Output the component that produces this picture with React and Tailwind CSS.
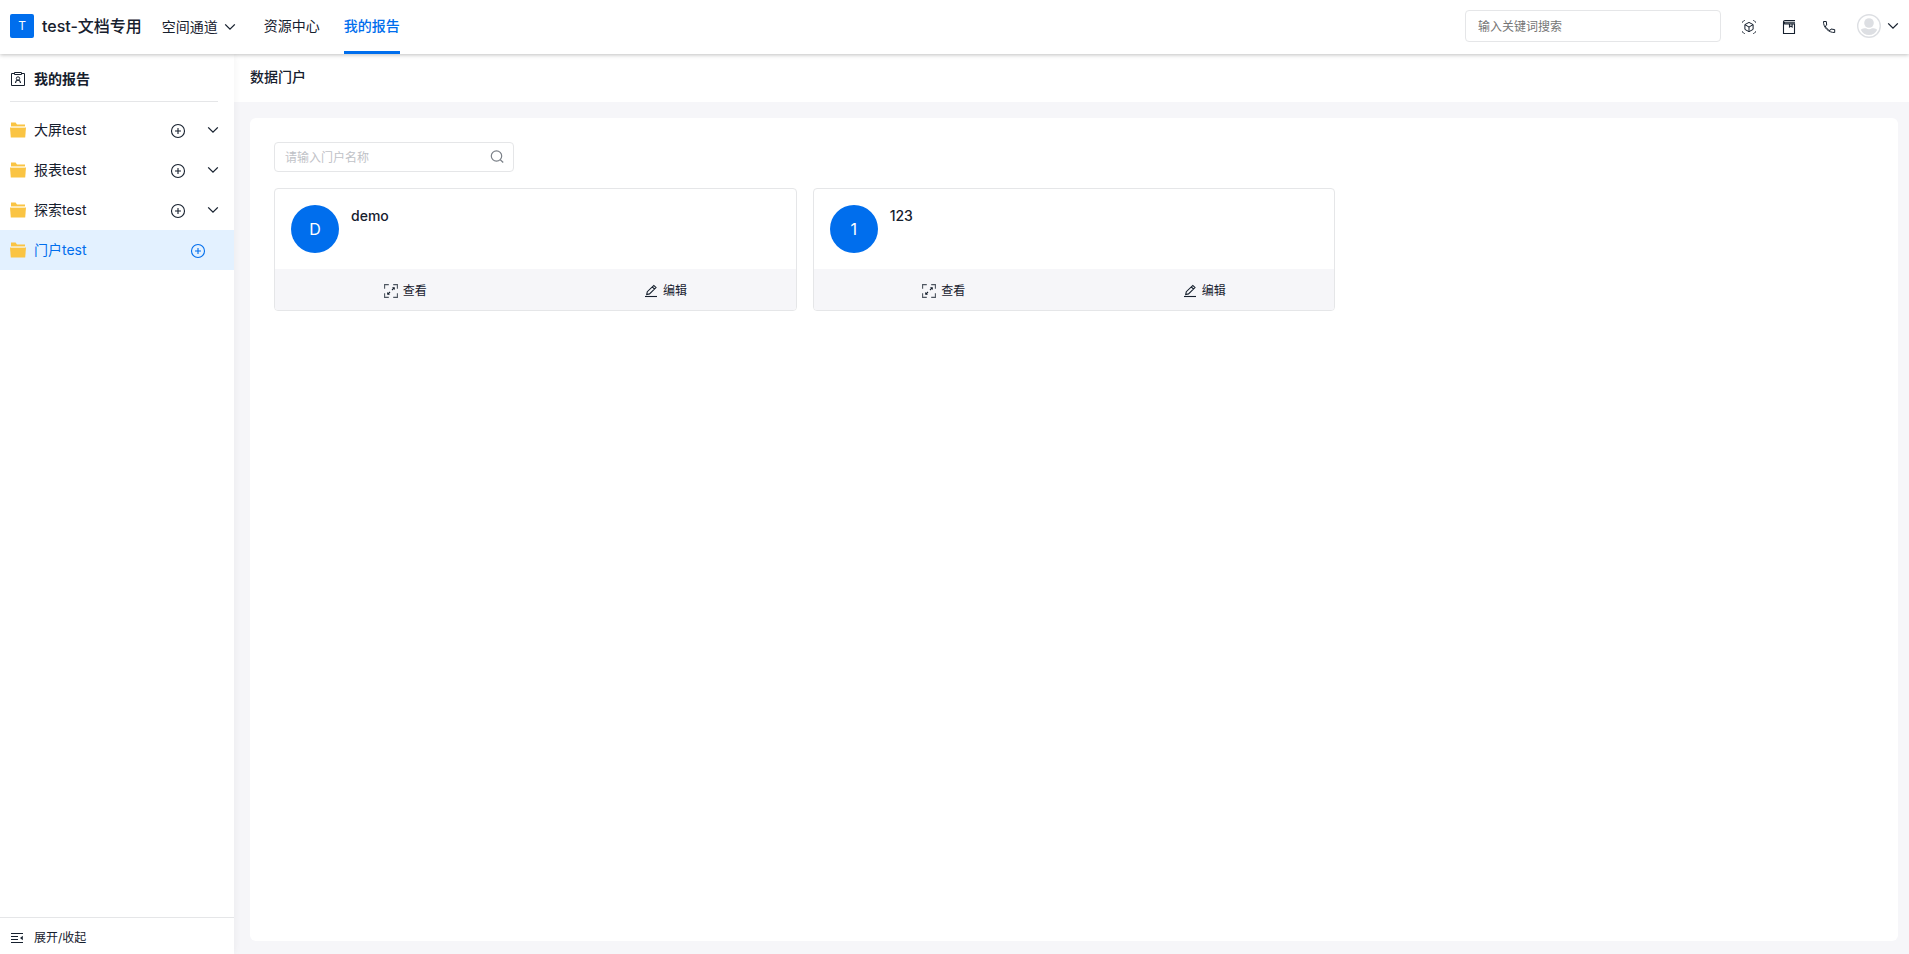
import React from 'react';

const folders = [
  { name: '大屏test', expandable: true },
  { name: '报表test', expandable: true },
  { name: '探索test', expandable: true },
  { name: '门户test', active: true },
];

const portals = [
  { name: 'demo', initial: 'D' },
  { name: '123', initial: '1' },
];

const ChevronIcon = () => (
  <svg className="w-3 h-3" viewBox="0 0 12 12" fill="none" stroke="currentColor" strokeWidth="1.3">
    <path d="M1.2 3.4 6 8.2l4.8-4.8" />
  </svg>
);

const FolderIcon = () => (
  <svg className="w-4 h-4 shrink-0" viewBox="0 0 16 16">
    <path d="M1 .4h4.600L7 2.600h8v2H1z" fill="#fac443" />
    <path d="M0 5.600h16l-.8 10H.8z" fill="#fac443" />
    <path d="M1 4.600h14v1H1z" fill="#fff0c9" />
  </svg>
);

const PlusCircleIcon = () => (
  <svg className="w-4 h-4" viewBox="0 0 16 16" fill="none" stroke="currentColor" strokeWidth="1.1">
    <circle cx="8" cy="8" r="6.5" />
    <path d="M8 5v6M5 8h6" />
  </svg>
);

const ReportIcon = () => (
  <svg className="w-4 h-4" viewBox="0 0 16 16" fill="none" stroke="currentColor" strokeWidth="1">
    <path d="M4 2.500H1.500v12h13v-12H12" />
    <path d="M4.500 1.500h7v2h-7z" />
    <circle cx="8" cy="7.500" r="1.700" />
    <path d="M5.500 12c.2-1.900 1.100-2.800 2.500-2.800s2.300.9 2.500 2.800" strokeWidth="1.100" />
  </svg>
);

const CubeScanIcon = () => (
  <svg className="w-4 h-4" viewBox="0 0 16 16" fill="none" stroke="currentColor" strokeWidth="1">
    <path d="M1.500 3.600V3L3 1.500h.6M12.400 1.500h.6L14.500 3v.6M1.500 12.400v.6L3 14.500h.6M12.400 14.500h.6l1.500-1.500v-.6" />
    <path d="m8 3.400 4.100 2.200v4.800L8 12.700l-4.100-2.300V5.600z" />
    <path d="M3.900 5.700 8 8l4.100-2.300M8 8v4.600" />
  </svg>
);

const BookIcon = () => (
  <svg className="w-4 h-4" viewBox="0 0 16 16" fill="none" stroke="currentColor" strokeWidth="1.1">
    <path d="M14 1.500H4A1.500 1.500 0 0 0 2.500 3v11.500h11v-9.600H3.600A1 1 0 0 1 3.600 3.300H14" />
    <path d="M8.500 5v3l1.300-.9 1.300.9V5" />
  </svg>
);

const PhoneIcon = () => (
  <svg className="w-4 h-4" viewBox="0 0 16 16" fill="none" stroke="currentColor" strokeWidth="1" strokeLinejoin="round">
    <path d="M2.500 2.500h2.800l.4 3.600-1.400.9c.9 2.100 2.500 3.700 4.700 4.600l1-1.600 3.700.6v2.900C7.600 13.700 2.300 8.600 2.500 2.500z" />
  </svg>
);

const AvatarIcon = () => (
  <svg className="w-6 h-6" viewBox="0 0 24 24">
    <circle cx="12" cy="12" r="11.3" fill="#fff" stroke="#dddfe3" strokeWidth="1.4" />
    <circle cx="12" cy="9" r="4.8" fill="#dddfe3" />
    <path d="M3.800 15.800C5 14.600 7 14.300 9 14.300c1.800 1.200 4.200 1.200 6 0 2 0 4 .3 5.200 1.500-1.500 3.300-4.600 5.300-8.200 5.300s-6.700-2-8.200-5.300z" fill="#dddfe3" />
  </svg>
);

const SearchIcon = () => (
  <svg className="w-3.5 h-3.5" viewBox="0 0 14 14" fill="none" stroke="currentColor" strokeWidth="1.2">
    <circle cx="6.500" cy="6" r="5.200" />
    <path d="m10.300 9.800 2.900 2.700" />
  </svg>
);

const ViewIcon = () => (
  <svg className="w-3.5 h-3.5" viewBox="0 0 14 14" fill="none" stroke="currentColor">
    <path d="M4.800 .6H.6v4.200M9.200 .6h4.200v4.200M4.800 13.400H.6V9.200M9.200 13.400h4.200V9.200" strokeWidth="1.1" opacity=".75" />
    <path d="M8 6l2-2M6 8l-2 2" strokeWidth="1.1" />
    <path d="M8 3.200h2.800V6zM6 10.800H3.200V8z" fill="currentColor" stroke="none" />
  </svg>
);

const EditIcon = () => (
  <svg className="w-3.5 h-3.5" viewBox="0 0 14 14" fill="none" stroke="currentColor" strokeWidth="1.1">
    <path d="M1 12.500h12" />
    <path d="m2.700 10.500.6-2.800 6.500-6.300 2.200 2.200-6.500 6.300zM8.300 2.900l2.200 2.200" />
  </svg>
);

const CollapseIcon = () => (
  <svg className="w-3.5 h-3.5" viewBox="0 0 14 14" fill="none" stroke="currentColor" strokeWidth="1">
    <path d="M1 2.500h12M1 5.500h7M1 8.500h7M1 11.500h12" />
    <path d="M12.800 4.800v4.400L10 7z" fill="currentColor" stroke="none" />
  </svg>
);

const Header = () => (
  <header className="relative z-20 flex h-[54px] shrink-0 items-center bg-white px-2.5 pb-0.5 shadow-[0_1px_4px_rgba(0,0,0,0.25)]">
    <span className="flex h-6 w-6 items-center justify-center rounded-xs bg-[#006eed] text-xs text-white">T</span>
    <span className="ml-2 text-base font-medium">test-文档专用</span>
    <button className="ml-5 flex items-center gap-1.5 pt-0.5">
      空间通道
      <ChevronIcon />
    </button>
    <nav className="-mb-0.5 ml-7 flex gap-6 self-stretch">
      <a href="#resources" className="flex items-center border-b-3 border-transparent">资源中心</a>
      <a href="#reports" className="flex items-center border-b-3 border-[#006eed] font-medium text-[#006eed]">我的报告</a>
    </nav>
    <input
      type="search"
      aria-label="输入关键词搜索"
      placeholder="输入关键词搜索"
      className="ml-auto h-8 w-64 rounded-sm border border-[#e5e6e8] px-3 text-xs outline-none placeholder:text-[#757575]"
    />
    <div className="ml-5 flex items-center gap-6 pt-0.5">
      <button aria-label="场景"><CubeScanIcon /></button>
      <button aria-label="文档"><BookIcon /></button>
      <button aria-label="电话"><PhoneIcon /></button>
    </div>
    <button aria-label="账户" className="ml-5 flex items-center gap-1.5">
      <AvatarIcon />
      <ChevronIcon />
    </button>
  </header>
);

const Sidebar = () => (
  <aside className="relative z-10 flex w-[234px] shrink-0 flex-col bg-white shadow-[0_0_8px_rgba(0,0,0,0.06)]">
    <h2 className="ml-2.5 mr-4 flex h-12 items-center gap-2 border-b border-[#e5e6e8] pt-0.5 text-sm font-semibold">
      <ReportIcon />
      我的报告
    </h2>
    <ul className="mt-2 flex-1">
      {folders.map((folder) => (
        <li
          key={folder.name}
          className={`flex h-10 items-center pl-2.5 ${folder.active ? 'bg-[#e3f1ff] pr-7 text-[#006eed]' : 'pr-[15px]'}`}
        >
          <a href="#folder" className="flex flex-1 items-center gap-2">
            <FolderIcon />
            {folder.name}
          </a>
          <button aria-label={`新建 ${folder.name}`} className="pt-0.5"><PlusCircleIcon /></button>
          {folder.expandable && (
            <button aria-label={`展开 ${folder.name}`} className="ml-[21px]"><ChevronIcon /></button>
          )}
        </li>
      ))}
    </ul>
    <button className="flex h-[37px] items-center gap-2.5 border-t border-[#e5e6e8] px-2.5 pt-1 text-xs">
      <CollapseIcon />
      展开/收起
    </button>
  </aside>
);

const PortalCard = ({ portal }) => (
  <article className="overflow-hidden rounded-sm border border-[#e5e6e8]">
    <div className="flex gap-3 p-4">
      <span className="flex h-12 w-12 items-center justify-center rounded-full bg-[#006eed] text-base text-white">
        {portal.initial}
      </span>
      <h3 className="text-sm/[22px] font-medium">{portal.name}</h3>
    </div>
    <div className="grid h-[41px] grid-cols-2 bg-[#f6f6f9] pt-0.5 text-xs">
      <button className="flex items-center justify-center gap-[5px]">
        <ViewIcon />
        查看
      </button>
      <button className="flex items-center justify-center gap-[5px]">
        <EditIcon />
        编辑
      </button>
    </div>
  </article>
);

export default function App() {
  return (
    <div className="flex h-screen flex-col bg-[#f6f6f9] font-[Inter,'Noto_Sans_CJK_SC',sans-serif] text-sm text-[#16202e]">
      <Header />
      <div className="flex min-h-0 flex-1">
        <Sidebar />
        <main className="flex min-w-0 flex-1 flex-col">
          <h1 className="flex h-12 shrink-0 items-center bg-white px-4 pb-0.5 text-sm font-medium">数据门户</h1>
          <section className="mb-[13px] ml-4 mr-[11px] mt-4 flex-1 rounded-md bg-white p-6">
            <label className="flex h-[30px] w-60 items-center rounded-sm border border-[#e5e6e8] pl-2.5 pr-[9px]">
              <input
                type="text"
                aria-label="请输入门户名称"
                placeholder="请输入门户名称"
                className="min-w-0 flex-1 pt-0.5 text-xs outline-none placeholder:text-[#bfc2c7]"
              />
              <span className="text-[#7b8088]"><SearchIcon /></span>
            </label>
            <div className="mt-4 grid grid-cols-3 gap-4">
              {portals.map((portal) => (
                <PortalCard key={portal.name} portal={portal} />
              ))}
            </div>
          </section>
        </main>
      </div>
    </div>
  );
}
